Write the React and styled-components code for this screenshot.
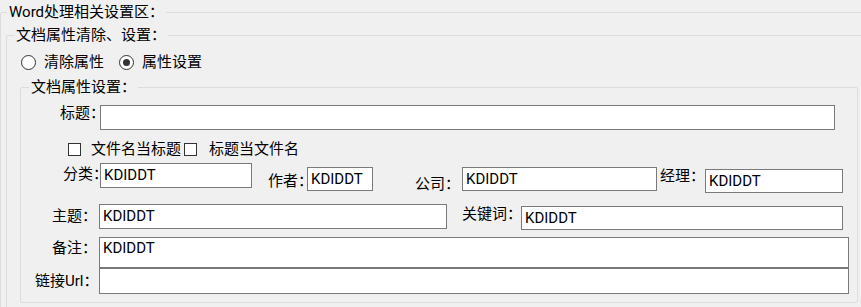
import React from "react";
import styled, { createGlobalStyle } from "styled-components";

const GlobalStyle = createGlobalStyle`
  html, body {
    margin: 0;
    padding: 0;
    background: #f0f0f0;
    overflow: hidden;
  }
  body {
    width: 861px;
    height: 307px;
    font-family: Roboto, "Noto Sans CJK SC", sans-serif;
    font-size: 15px;
    color: #000;
  }
`;

const Group = styled.fieldset`
  box-sizing: border-box;
  min-width: 0;
  width: ${(p) => p.$w}px;
  margin: ${(p) => p.$mt || 0}px 0 0 ${(p) => p.$ml || 0}px;
  padding: 0 0 ${(p) => p.$pb || 0}px 0;
  border: 1px solid #dcdcdc;
  border-radius: 2px;
`;

const Title = styled.legend`
  margin-left: ${(p) => p.$ml}px;
  padding: 0 2px;
  font-size: 15px;
  line-height: 16px;
  white-space: nowrap;
`;

const Row = styled.div`
  display: flex;
  align-items: flex-start;
  margin-top: ${(p) => p.$mt || 0}px;
  margin-left: ${(p) => p.$ml || 0}px;
  line-height: 16px;
`;

const Field = styled.div`
  display: flex;
  align-items: flex-start;
  margin-left: ${(p) => p.$ml || 0}px;
`;

const Label = styled.span`
  width: ${(p) => p.$w}px;
  flex-shrink: 0;
  padding-top: ${(p) => p.$pt || 0}px;
  line-height: 16px;
  white-space: nowrap;
`;

const TextBox = styled.input`
  box-sizing: border-box;
  width: ${(p) => p.$w}px;
  height: ${(p) => p.$h}px;
  margin: ${(p) => p.$mt || 0}px 0 0 0;
  padding: 0 2px 1px 3px;
  border: 1px solid #7a7a7a;
  border-radius: 0;
  background: #fff;
  font-family: inherit;
  font-size: 15px;
  color: #000;
  outline: none;
`;

const TextArea = styled.textarea`
  box-sizing: border-box;
  width: ${(p) => p.$w}px;
  height: ${(p) => p.$h}px;
  margin: 0;
  padding: 2px 3px 0;
  border: 1px solid #7a7a7a;
  border-radius: 0;
  background: #fff;
  font-family: inherit;
  font-size: 15px;
  line-height: 16px;
  color: #000;
  resize: none;
  overflow: hidden;
  outline: none;
  display: block;
`;

const Option = styled.label`
  display: flex;
  align-items: center;
  gap: ${(p) => p.$gap}px;
  margin-left: ${(p) => p.$ml || 0}px;
  white-space: nowrap;
`;

const Radio = styled.span`
  box-sizing: border-box;
  width: 15px;
  height: 15px;
  border: 1px solid #333;
  border-radius: 50%;
  background: #fff;
  display: flex;
  align-items: center;
  justify-content: center;
  &::after {
    content: "";
    width: 7px;
    height: 7px;
    border-radius: 50%;
    background: ${(p) => (p.$on ? "#333" : "transparent")};
  }
`;

const Check = styled.span`
  box-sizing: border-box;
  width: 13px;
  height: 13px;
  border: 1px solid #333;
  background: #fff;
  margin-top: 1px;
`;

export default function App() {
  return (
    <>
      <GlobalStyle />
      <Group $w={900} $mt={4}>
        <Title $ml={6}>Word处理相关设置区：</Title>
        <Group $w={900} $mt={7} $ml={5} $pb={12}>
          <Title $ml={7}>文档属性清除、设置：</Title>
          <Row $mt={11} $ml={14}>
            <Option $gap={8}>
              <Radio />
              清除属性
            </Option>
            <Option $gap={8} $ml={15}>
              <Radio $on />
              属性设置
            </Option>
          </Row>
          <Group $w={838} $mt={9} $ml={13} $pb={8}>
            <Title $ml={8}>文档属性设置：</Title>
            <Row $mt={10}>
              <Field $ml={39}>
                <Label $w={40}>标题：</Label>
                <TextBox $w={735} $h={25} defaultValue="" />
              </Field>
            </Row>
            <Row $mt={11} $ml={47}>
              <Option $gap={10}>
                <Check />
                文件名当标题
              </Option>
              <Option $gap={12} $ml={3}>
                <Check />
                标题当文件名
              </Option>
            </Row>
            <Row $mt={6}>
              <Field $ml={42}>
                <Label $w={37} $pt={3}>分类：</Label>
                <TextBox $w={152} $h={25} defaultValue="KDIDDT" />
              </Field>
              <Field $ml={16}>
                <Label $w={39} $pt={10}>作者：</Label>
                <TextBox $w={66} $h={24} $mt={4} defaultValue="KDIDDT" />
              </Field>
              <Field $ml={42}>
                <Label $w={47} $pt={13}>公司：</Label>
                <TextBox $w={195} $h={24} $mt={4} defaultValue="KDIDDT" />
              </Field>
              <Field $ml={3}>
                <Label $w={45} $pt={5}>经理：</Label>
                <TextBox $w={138} $h={24} $mt={6} defaultValue="KDIDDT" />
              </Field>
            </Row>
            <Row $mt={11}>
              <Field $ml={31}>
                <Label $w={47} $pt={4}>主题：</Label>
                <TextBox $w={348} $h={25} defaultValue="KDIDDT" />
              </Field>
              <Field $ml={15}>
                <Label $w={59} $pt={2}>关键词：</Label>
                <TextBox $w={322} $h={24} $mt={2} defaultValue="KDIDDT" />
              </Field>
            </Row>
            <Row $mt={7}>
              <Field $ml={31}>
                <Label $w={47} $pt={3}>备注：</Label>
                <TextArea $w={750} $h={31} defaultValue="KDIDDT" />
              </Field>
            </Row>
            <Row>
              <Field $ml={14}>
                <Label $w={64} $pt={5}>链接Url：</Label>
                <TextBox $w={750} $h={26} defaultValue="" />
              </Field>
            </Row>
          </Group>
        </Group>
      </Group>
    </>
  );
}
